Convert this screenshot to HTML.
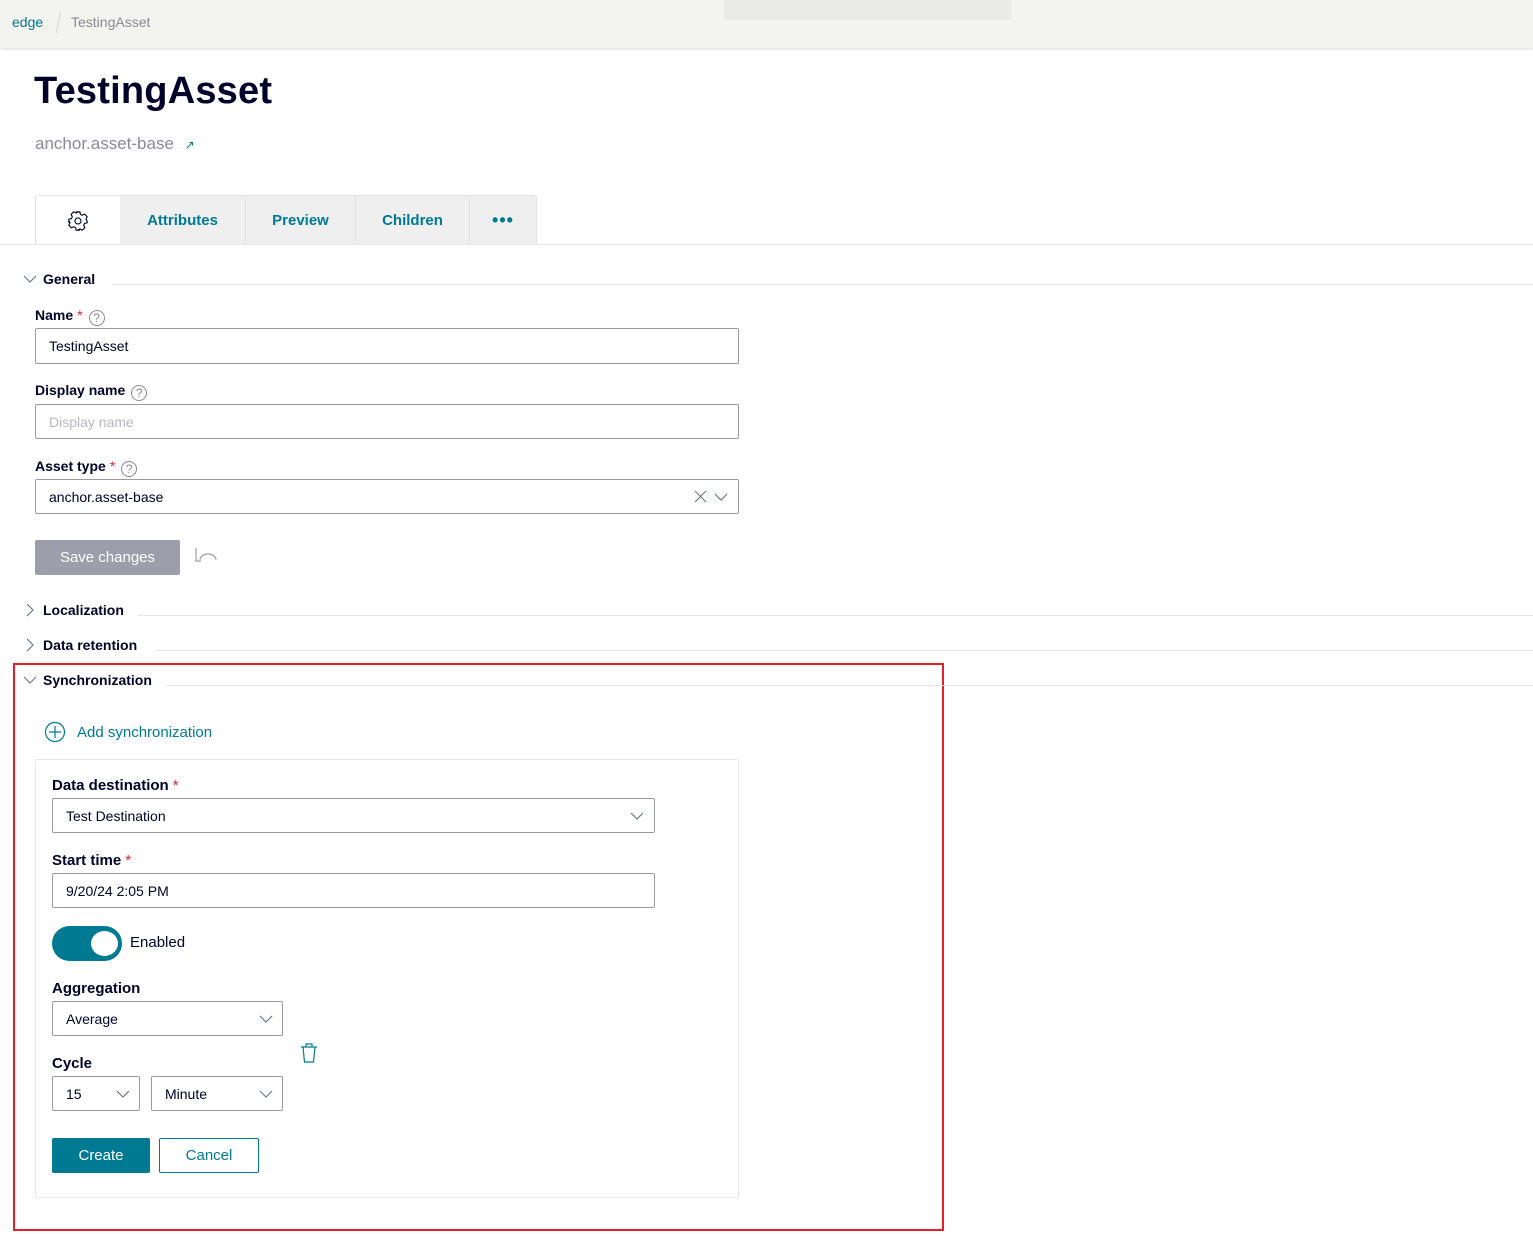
<!DOCTYPE html>
<html><head><meta charset="utf-8"><style>
*{box-sizing:border-box;margin:0;padding:0}
body{width:1533px;height:1254px;background:#fff;font-family:"Liberation Sans",sans-serif;color:#000028;position:relative;overflow:hidden;font-size:14px}
.a{position:absolute}
.top{left:0;top:0;width:1533px;height:48px;background:#f3f3f0;box-shadow:0 1px 3px rgba(0,0,40,.15)}
.lbl{font-weight:bold;font-size:14px;color:#000028}
.req{color:#e0202b;font-weight:normal;margin-left:4px}
.inp{border:1px solid #9999a9;border-radius:2px;background:#fff;font-size:14px;padding-left:13px;display:flex;align-items:center;color:#000028}
.sec{font-size:14px;font-weight:bold}
.line{height:1px;background:#e6e6e6}
.q{display:inline-block;width:16px;height:16px;border:1px solid #8a8a96;border-radius:50%;font-size:12px;line-height:14px;text-align:center;color:#8a8a96;font-weight:normal;margin-left:6px;vertical-align:-2px}
.tab{top:196px;height:48px;background:#efefef;color:#007993;font-weight:bold;font-size:15px;display:flex;align-items:center;justify-content:center;border-right:1px solid #e2e2e2}
</style></head><body>
<div class="a top"></div>
<div class="a" style="left:724px;top:0;width:287px;height:20px;background:#eaeae6"></div>
<div class="a" style="left:12px;top:14px;font-size:14px;color:#007993">edge</div>
<div class="a" style="left:58px;top:11px;width:1px;height:22px;background:#d8d8d8;transform:rotate(12deg)"></div>
<div class="a" style="left:71px;top:14px;font-size:14px;color:#8a8a96">TestingAsset</div>

<div class="a" style="left:34px;top:70px;font-size:38px;font-weight:bold;color:#000028;letter-spacing:0.2px">TestingAsset</div>
<div class="a" style="left:35px;top:134px;font-size:17px;color:#8a8a96">anchor.asset-base <span style="font-size:12px;color:#007993;margin-left:6px">↗</span></div>

<div class="a" style="left:35px;top:195px;width:502px;height:50px;border:1px solid #e2e2e2;border-bottom:none;border-radius:3px 3px 0 0"></div>
<div class="a" style="left:36px;top:196px;width:84px;height:49px;background:#fff;display:flex;align-items:center;justify-content:center">
<svg width="22" height="22" viewBox="0 0 24 24" fill="none" stroke="#000028" stroke-width="1.2"><path d="M10 2h4l.6 2.8 2 1 2.6-1.3 2.8 2.8-1.3 2.6 1 2L22 12v0l0 2-2.8.6-1 2 1.3 2.6-2.8 2.8-2.6-1.3-2 1L14 22h-4l-.6-2.8-2-1-2.6 1.3-2.8-2.8 1.3-2.6-1-2L2 14v-4l2.8-.6 1-2L4.5 4.8l2.8-2.8 2.6 1.3 2-1z"/><circle cx="12" cy="12" r="3.3"/></svg></div>
<div class="a tab" style="left:120px;width:126px">Attributes</div>
<div class="a tab" style="left:246px;width:110px">Preview</div>
<div class="a tab" style="left:356px;width:114px">Children</div>
<div class="a tab" style="left:470px;width:66px;border-right:none;font-size:18px;letter-spacing:1px">•••</div>
<div class="a line" style="left:0;top:244px;width:1533px"></div>

<svg class="a" style="left:23px;top:274px" width="14" height="10"><path d="M1 2l6 6 6-6" fill="none" stroke="#6a7a8a" stroke-width="1.2"/></svg>
<div class="a sec" style="left:43px;top:271px">General</div>
<div class="a line" style="left:111px;top:284px;width:1422px"></div>

<div class="a lbl" style="left:35px;top:307px">Name<span class="req">*</span><span class="q">?</span></div>
<div class="a inp" style="left:35px;top:328px;width:704px;height:36px">TestingAsset</div>
<div class="a lbl" style="left:35px;top:382px">Display name<span class="q">?</span></div>
<div class="a inp" style="left:35px;top:404px;width:704px;height:35px;color:#b8b8c0">Display name</div>
<div class="a lbl" style="left:35px;top:458px">Asset type<span class="req">*</span><span class="q">?</span></div>
<div class="a inp" style="left:35px;top:479px;width:704px;height:35px">anchor.asset-base</div>
<svg class="a" style="left:694px;top:490px" width="40" height="14"><path d="M1 1l11 11M12 1L1 12" stroke="#6a7a8a" stroke-width="1.1"/><path d="M21 4l6 6 6-6" fill="none" stroke="#6a7a8a" stroke-width="1.2"/></svg>

<div class="a" style="left:35px;top:540px;width:145px;height:35px;background:#9d9dab;border-radius:2px;color:#fff;font-size:15px;display:flex;align-items:center;justify-content:center">Save changes</div>
<svg class="a" style="left:194px;top:547px" width="26" height="18"><path d="M2 1v13h5M6 13A8 6 0 0 1 22 13" fill="none" stroke="#9d9dab" stroke-width="1.2"/></svg>

<svg class="a" style="left:25px;top:603px" width="10" height="14"><path d="M2 1l6 6-6 6" fill="none" stroke="#6a7a8a" stroke-width="1.2"/></svg>
<div class="a sec" style="left:43px;top:602px">Localization</div>
<div class="a line" style="left:138px;top:615px;width:1395px"></div>
<svg class="a" style="left:25px;top:638px" width="10" height="14"><path d="M2 1l6 6-6 6" fill="none" stroke="#6a7a8a" stroke-width="1.2"/></svg>
<div class="a sec" style="left:43px;top:637px">Data retention</div>
<div class="a line" style="left:155px;top:650px;width:1378px"></div>

<div class="a" style="left:13px;top:663px;width:931px;height:568px;border:2px solid #e3212b"></div>
<svg class="a" style="left:23px;top:675px" width="14" height="10"><path d="M1 2l6 6 6-6" fill="none" stroke="#6a7a8a" stroke-width="1.2"/></svg>
<div class="a sec" style="left:43px;top:672px">Synchronization</div>
<div class="a line" style="left:166px;top:685px;width:1367px"></div>

<svg class="a" style="left:44px;top:721px" width="22" height="22"><circle cx="11" cy="11" r="9.5" fill="none" stroke="#007993" stroke-width="1.2"/><path d="M11 5v12M5 11h12" stroke="#007993" stroke-width="1.2"/></svg>
<div class="a" style="left:77px;top:724px;color:#007993;font-size:15px">Add synchronization</div>

<div class="a" style="left:35px;top:759px;width:704px;height:439px;border:1px solid #e8e8e8;border-radius:2px"></div>
<div class="a lbl" style="left:52px;top:777px;font-size:15px">Data destination<span class="req">*</span></div>
<div class="a inp" style="left:52px;top:798px;width:603px;height:35px">Test Destination</div>
<svg class="a" style="left:630px;top:812px" width="14" height="9"><path d="M1 1l6 6 6-6" fill="none" stroke="#6a7a8a" stroke-width="1.2"/></svg>
<div class="a lbl" style="left:52px;top:852px;font-size:15px">Start time<span class="req">*</span></div>
<div class="a inp" style="left:52px;top:873px;width:603px;height:35px">9/20/24 2:05 PM</div>

<div class="a" style="left:52px;top:926px;width:70px;height:35px;border-radius:18px;background:#007993"></div>
<div class="a" style="left:91px;top:931px;width:27px;height:25px;border-radius:50%;background:#fff"></div>
<div class="a" style="left:130px;top:934px;font-size:15px">Enabled</div>

<div class="a lbl" style="left:52px;top:980px;font-size:15px">Aggregation</div>
<div class="a inp" style="left:52px;top:1001px;width:231px;height:35px">Average</div>
<svg class="a" style="left:259px;top:1015px" width="14" height="9"><path d="M1 1l6 6 6-6" fill="none" stroke="#6a7a8a" stroke-width="1.2"/></svg>
<svg class="a" style="left:299px;top:1042px" width="22" height="24"><path d="M2 5h16M7 5V2h6v3M4 5l1.5 15h9L16 5" fill="none" stroke="#007993" stroke-width="1.2"/></svg>
<div class="a lbl" style="left:52px;top:1055px;font-size:15px">Cycle</div>
<div class="a inp" style="left:52px;top:1076px;width:88px;height:35px">15</div>
<svg class="a" style="left:116px;top:1090px" width="14" height="9"><path d="M1 1l6 6 6-6" fill="none" stroke="#6a7a8a" stroke-width="1.2"/></svg>
<div class="a inp" style="left:151px;top:1076px;width:132px;height:35px">Minute</div>
<svg class="a" style="left:259px;top:1090px" width="14" height="9"><path d="M1 1l6 6 6-6" fill="none" stroke="#6a7a8a" stroke-width="1.2"/></svg>

<div class="a" style="left:52px;top:1138px;width:98px;height:35px;background:#007993;border-radius:2px;color:#fff;font-size:15px;display:flex;align-items:center;justify-content:center">Create</div>
<div class="a" style="left:159px;top:1138px;width:100px;height:35px;border:1px solid #007993;border-radius:2px;color:#007993;font-size:15px;display:flex;align-items:center;justify-content:center">Cancel</div>
</body></html>
